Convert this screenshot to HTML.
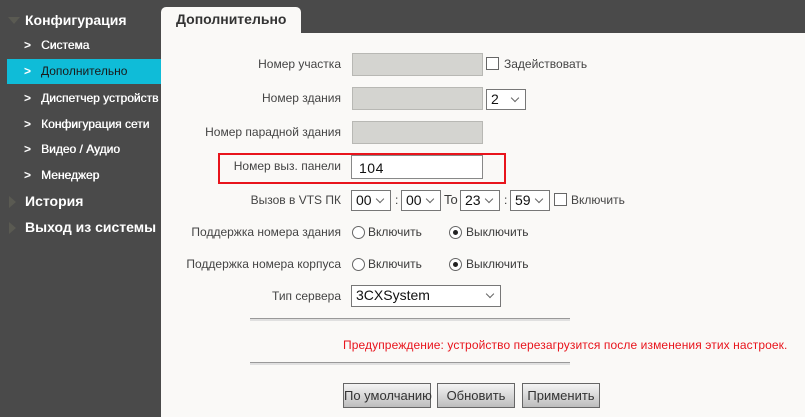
<!DOCTYPE html><html><head><meta charset="utf-8"><style>
*{margin:0;padding:0;box-sizing:border-box}
body{width:805px;height:417px;background:#4a4a4a;font-family:"Liberation Sans",Arial,sans-serif;position:relative;overflow:hidden;font-size:12px;color:#3a3a3a}
.a{position:absolute}
.side{color:#fff;font-size:12px;white-space:nowrap;text-shadow:0.4px 0 0 #fff}
.chev{position:absolute;left:24px;font-weight:bold;color:#fff}
.h{color:#fff;font-weight:bold;font-size:14px}
.tri{position:absolute;width:0;height:0}
.lbl{position:absolute;right:464px;text-align:right;white-space:nowrap;color:#444}
.gin{position:absolute;background:#d4d4d0;border:1px solid #b8b8b4;left:352px;width:131px;height:23px}
.sel{position:absolute;background:#fff;border:1px solid #777;height:21px;font-size:14px;color:#111;padding-left:4px;line-height:19px}
.sel:after{content:"";position:absolute;right:7px;top:5px;width:5px;height:5px;border-right:1.3px solid #666;border-bottom:1.3px solid #666;transform:rotate(45deg)}
.cb{position:absolute;width:13px;height:13px;border:1px solid #666;background:#fff}
.rd{position:absolute;width:13px;height:13px;border:1px solid #666;border-radius:50%;background:#fff}
.rd.on:after{content:"";position:absolute;left:3px;top:3px;width:5px;height:5px;border-radius:50%;background:#222}
.hr{position:absolute;left:250px;width:320px;height:3px;border-top:1px solid #999;background:#e0e0e0}
.btn{position:absolute;top:383px;height:25px;border:1px solid #666;background:linear-gradient(#f4f4f4,#bdbdbd);text-align:center;line-height:23px;color:#333;font-size:13px;white-space:nowrap}
</style></head><body>
<div class="a" style="left:161px;top:33px;width:644px;height:384px;background:#faf9f7"></div>
<div class="a" style="left:161px;top:7px;width:140px;height:27px;background:#faf9f7;border-radius:5px 5px 0 0"></div>
<div class="a" style="left:176px;top:11px;font-weight:bold;font-size:14px;color:#333">Дополнительно</div>

<div class="tri" style="left:8px;top:17px;border-left:6px solid transparent;border-right:6px solid transparent;border-top:7px solid #5a5a52"></div>
<div class="a h" style="left:25px;top:12px">Конфигурация</div>
<div class="a" style="left:7px;top:59px;width:154px;height:25px;background:#0fbcd8"></div>
<div class="chev" style="top:38px">&gt;</div><div class="a side" style="left:41px;top:38px">Система</div>
<div class="chev" style="top:64px">&gt;</div><div class="a side" style="left:41px;top:64px;color:#1a1a1a;text-shadow:none">Дополнительно</div>
<div class="chev" style="top:91px">&gt;</div><div class="a side" style="left:41px;top:91px">Диспетчер устройств</div>
<div class="chev" style="top:117px">&gt;</div><div class="a side" style="left:41px;top:117px">Конфигурация сети</div>
<div class="chev" style="top:142px">&gt;</div><div class="a side" style="left:41px;top:142px">Видео / Аудио</div>
<div class="chev" style="top:168px">&gt;</div><div class="a side" style="left:41px;top:168px">Менеджер</div>
<div class="tri" style="left:9px;top:196px;border-top:6px solid transparent;border-bottom:6px solid transparent;border-left:7px solid #5a5a52"></div>
<div class="a h" style="left:25px;top:193px">История</div>
<div class="tri" style="left:9px;top:222px;border-top:6px solid transparent;border-bottom:6px solid transparent;border-left:7px solid #5a5a52"></div>
<div class="a h" style="left:25px;top:219px">Выход из системы</div>

<div class="lbl" style="top:57px">Номер участка</div>
<div class="gin" style="top:53px"></div>
<div class="cb" style="left:486px;top:57px"></div>
<div class="a" style="left:504px;top:57px;color:#444">Задействовать</div>

<div class="lbl" style="top:91px">Номер здания</div>
<div class="gin" style="top:87px"></div>
<div class="sel" style="left:486px;top:89px;width:40px">2</div>

<div class="lbl" style="top:125px">Номер парадной здания</div>
<div class="gin" style="top:121px"></div>

<div class="a" style="left:218px;top:153px;width:288px;height:31px;border:2px solid #e8141c"></div>
<div class="lbl" style="top:159px">Номер выз. панели</div>
<div class="a" style="left:351px;top:155px;width:132px;height:24px;border:1px solid #888;background:#fff;font-size:14px;padding:4px 0 0 7px;color:#111;letter-spacing:.5px">104</div>

<div class="lbl" style="top:193px">Вызов в VTS ПК</div>
<div class="sel" style="left:351px;top:190px;width:40px">00</div>
<div class="a" style="left:395px;top:193px">:</div>
<div class="sel" style="left:401px;top:190px;width:40px">00</div>
<div class="a" style="left:444px;top:192px;font-size:13px">To</div>
<div class="sel" style="left:460px;top:190px;width:40px">23</div>
<div class="a" style="left:504px;top:193px">:</div>
<div class="sel" style="left:510px;top:190px;width:40px">59</div>
<div class="cb" style="left:554px;top:193px"></div>
<div class="a" style="left:571px;top:193px;color:#444">Включить</div>

<div class="lbl" style="top:225px">Поддержка номера здания</div>
<div class="rd" style="left:352px;top:226px"></div><div class="a" style="left:368px;top:225px">Включить</div>
<div class="rd on" style="left:449px;top:226px"></div><div class="a" style="left:466px;top:225px">Выключить</div>
<div class="lbl" style="top:257px">Поддержка номера корпуса</div>
<div class="rd" style="left:352px;top:258px"></div><div class="a" style="left:368px;top:257px">Включить</div>
<div class="rd on" style="left:449px;top:258px"></div><div class="a" style="left:466px;top:257px">Выключить</div>

<div class="lbl" style="top:289px">Тип сервера</div>
<div class="sel" style="left:351px;top:285px;width:150px;height:22px">3CXSystem</div>

<div class="hr" style="top:318px"></div>
<div class="a" style="left:343px;top:338px;color:#e8141c;white-space:nowrap;letter-spacing:0.1px">Предупреждение: устройство перезагрузится после изменения этих настроек.</div>
<div class="hr" style="top:362px"></div>

<div class="btn" style="left:343px;width:88px">По умолчанию</div>
<div class="btn" style="left:437px;width:78px">Обновить</div>
<div class="btn" style="left:522px;width:78px">Применить</div>
</body></html>
